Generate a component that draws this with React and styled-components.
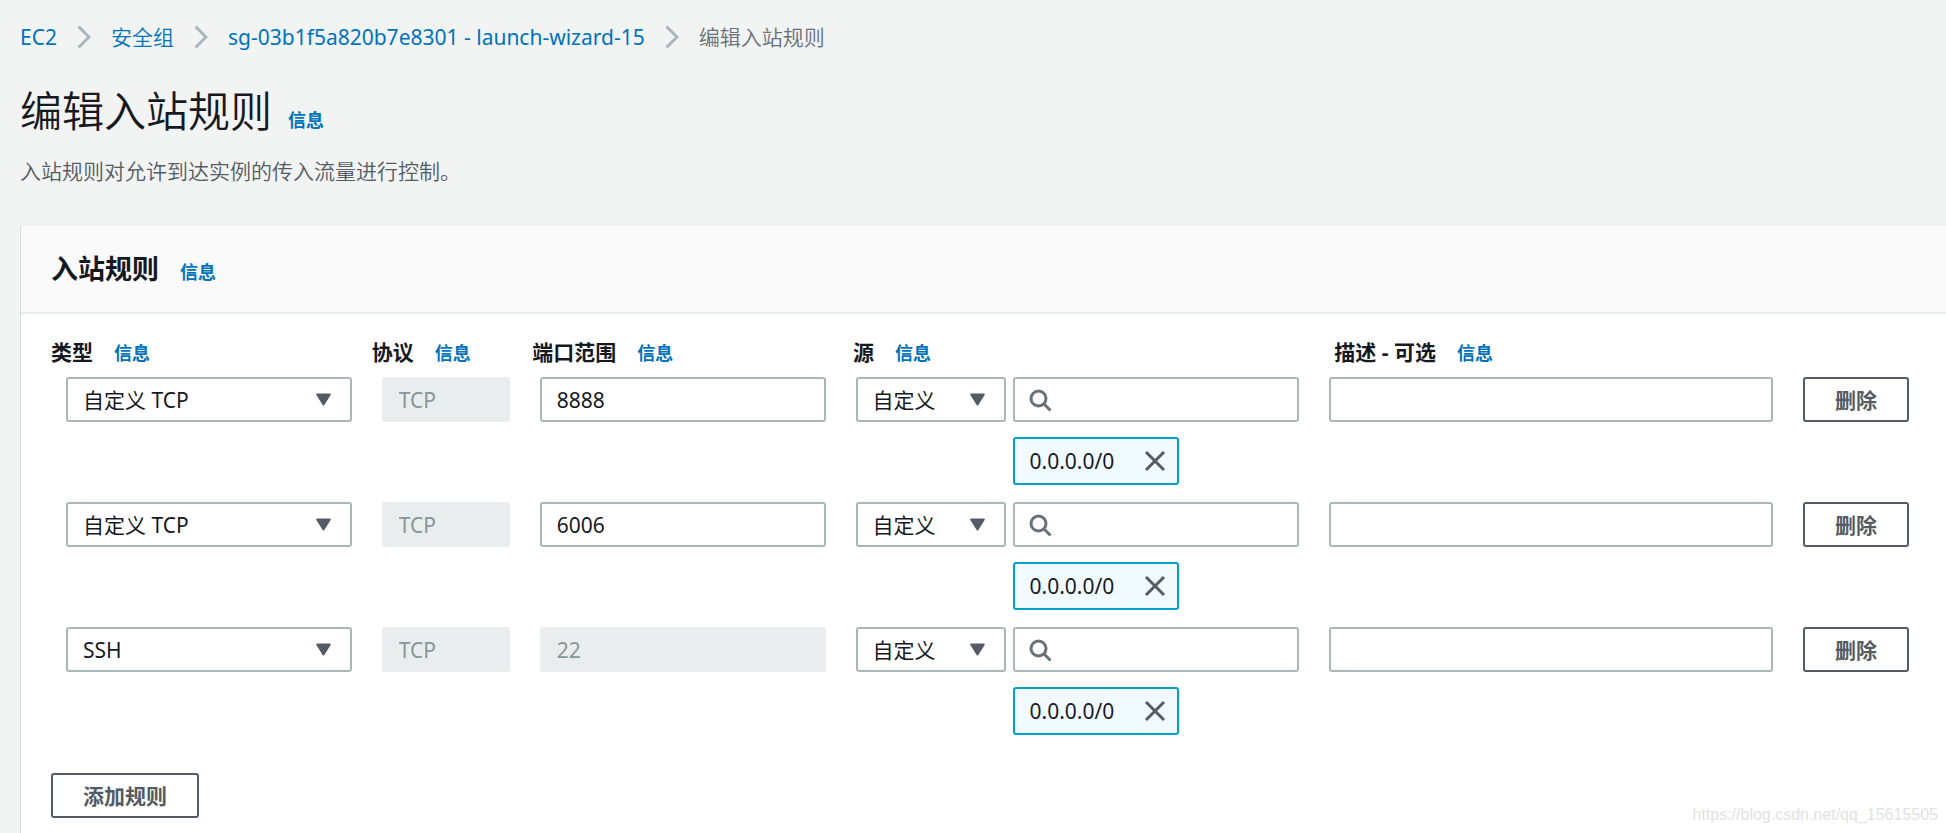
import React, { useState } from "react";
import styled, { createGlobalStyle, css } from "styled-components";

const color = {
  page: "#f2f3f3",
  text: "#16191f",
  secondary: "#545b64",
  muted: "#687078",
  disabled: "#879596",
  link: "#0073bb",
  border: "#aab7b8",
  divider: "#eaeded",
  token: "#00a1c9",
};

const GlobalStyle = createGlobalStyle`
  *, *::before, *::after { box-sizing: border-box; }
  body {
    margin: 0;
    background: ${color.page};
    color: ${color.text};
    font-family: "Noto Sans", "Noto Sans CJK SC", sans-serif;
    font-size: 21px;
    line-height: 30px;
  }
  button, input, select { font: inherit; color: inherit; }
`;

const Page = styled.main`
  position: relative;
  display: flex;
  flex-direction: column;
  min-height: 100vh;
  padding: 22px 0 0 20px;
  overflow: hidden;
`;

const Crumbs = styled.ol`
  display: flex;
  align-items: center;
  gap: 20px;
  margin: 0;
  padding: 0;
  list-style: none;
  color: ${color.muted};
`;

const Crumb = styled.li`
  display: flex;
  align-items: center;
  gap: 20px;
  white-space: nowrap;
  font-weight: ${(p) => (p.$light ? 350 : 400)};
`;

const Link = styled.a`
  color: ${color.link};
  text-decoration: none;
  &:hover { text-decoration: underline; }
`;

const InfoLink = styled(Link)`
  font-size: 18px;
  font-weight: 700;
`;

const PageHeader = styled.header`
  padding: 29px 0 39px;
`;

const TitleLine = styled.div`
  display: flex;
  align-items: baseline;
  gap: ${(p) => p.$gap}px;
`;

const PageTitle = styled.h1`
  margin: 0;
  font-size: 42px;
  line-height: 60px;
  font-weight: 350;
`;

const Description = styled.p`
  margin: 15px 0 0;
  color: ${color.secondary};
  font-weight: 350;
`;

const Card = styled.section`
  flex: 1;
  background: #fff;
  border-top: 1px solid ${color.divider};
  border-left: 1px solid #d5dbdb;
`;

const CardHeader = styled.div`
  padding: 23px 30px;
  background: #fafafa;
  border-bottom: 2px solid ${color.divider};
`;

const CardTitle = styled.h2`
  margin: 0;
  font-size: 27px;
  line-height: 40px;
  font-weight: 700;
`;

const CardBody = styled.div`
  padding: 23px 0 15px 30px;
`;

const ColumnTitles = styled.div`
  display: grid;
  grid-template-columns: 2fr 1fr 2fr 3fr 4fr;
  margin-right: -30px;
  padding-bottom: 9px;
`;

const ColumnTitle = styled(TitleLine)`
  font-weight: 700;
  white-space: nowrap;
`;

const RuleRow = styled.div`
  display: grid;
  grid-template-columns: 2fr 1fr 2fr 3fr 3fr 1fr;
  align-items: start;
  margin-bottom: 17px;
`;

const Cell = styled.div`
  min-width: 0;
  padding: 0 15px;
`;

const SourceCell = styled(Cell)`
  display: grid;
  grid-template-columns: 150px minmax(0, 1fr);
  column-gap: 7px;
  row-gap: 15px;
`;

const Field = styled.div`
  position: relative;
  display: flex;
`;

const control = css`
  width: 100%;
  height: 45px;
  padding: 0 15px;
  border: 2px solid ${color.border};
  border-radius: 3px;
  background: #fff;
  outline-color: ${color.token};
`;

const Select = styled.select`
  ${control}
  appearance: none;
  padding-right: 42px;
`;

const Input = styled.input`
  ${control}
  padding-left: ${(p) => (p.$search ? 48 : 15)}px;
  &:disabled {
    border-color: ${color.divider};
    background: ${color.divider};
    color: ${color.disabled};
  }
`;

const Caret = styled.svg`
  position: absolute;
  top: 16px;
  right: 21px;
  pointer-events: none;
`;

const SearchGlyph = styled.svg`
  position: absolute;
  top: 12px;
  left: 16px;
  pointer-events: none;
`;

const Token = styled.div`
  grid-column: 2;
  justify-self: start;
  display: flex;
  align-items: center;
  justify-content: space-between;
  gap: 24px;
  min-width: 166px;
  height: 48px;
  padding: 0 11px 0 15px;
  border: 2px solid ${color.token};
  border-radius: 3px;
  background: #f1faff;
`;

const TokenClose = styled.button`
  display: flex;
  padding: 0;
  border: 0;
  background: none;
  cursor: pointer;
`;

const Button = styled.button`
  height: 45px;
  padding: 0 30px;
  border: 2px solid ${color.secondary};
  border-radius: 3px;
  background: #fff;
  color: ${color.secondary};
  font-weight: 700;
  white-space: nowrap;
  cursor: pointer;
`;

const Actions = styled.div`
  padding-top: 21px;
`;

const Watermark = styled.div`
  position: absolute;
  right: 8px;
  bottom: 8px;
  color: #e2e2e2;
  font: 16px/20px "Liberation Sans", sans-serif;
  pointer-events: none;
`;

function Chevron() {
  return (
    <svg width="14" height="24" viewBox="0 0 14 24" fill="none" stroke={color.border} strokeWidth="3" aria-hidden="true">
      <path d="M1.5 1.5 12 12 1.5 22.5" />
    </svg>
  );
}

function SelectField({ labelledBy, value, options }) {
  const [current, setCurrent] = useState(value);
  return (
    <Field>
      <Select aria-labelledby={labelledBy} value={current} onChange={(e) => setCurrent(e.target.value)}>
        {options.map((o) => (
          <option key={o}>{o}</option>
        ))}
      </Select>
      <Caret width="15" height="13" viewBox="0 0 15 13" aria-hidden="true">
        <path
          d="M1.2 1.5h12.6L7.5 11.5z"
          fill={color.secondary}
          stroke={color.secondary}
          strokeWidth="2"
          strokeLinejoin="round"
        />
      </Caret>
    </Field>
  );
}

const crumbs = [
  { label: "EC2" },
  { label: "安全组", light: true },
  { label: "sg-03b1f5a820b7e8301 - launch-wizard-15" },
];

const columns = [
  { id: "col-type", label: "类型" },
  { id: "col-protocol", label: "协议" },
  { id: "col-port", label: "端口范围" },
  { id: "col-source", label: "源" },
  { id: "col-description", label: "描述 - 可选" },
];

const rules = [
  { type: "自定义 TCP", port: "8888" },
  { type: "自定义 TCP", port: "6006" },
  { type: "SSH", port: "22", fixedPort: true },
];

function Rule({ rule }) {
  return (
    <RuleRow>
      <Cell>
        <SelectField labelledBy="col-type" value={rule.type} options={["自定义 TCP", "SSH"]} />
      </Cell>
      <Cell>
        <Field>
          <Input aria-labelledby="col-protocol" defaultValue="TCP" disabled />
        </Field>
      </Cell>
      <Cell>
        <Field>
          <Input aria-labelledby="col-port" defaultValue={rule.port} disabled={rule.fixedPort} />
        </Field>
      </Cell>
      <SourceCell>
        <SelectField labelledBy="col-source" value="自定义" options={["自定义"]} />
        <Field>
          <Input $search type="text" aria-labelledby="col-source" />
          <SearchGlyph
            width="24"
            height="24"
            viewBox="0 0 24 24"
            fill="none"
            stroke={color.muted}
            strokeWidth="3"
            aria-hidden="true"
          >
            <circle cx="9.5" cy="9.5" r="7.5" />
            <path d="M14.8 14.8 21.5 21.5" />
          </SearchGlyph>
        </Field>
        <Token>
          <span>0.0.0.0/0</span>
          <TokenClose type="button" aria-label="0.0.0.0/0">
            <svg width="22" height="22" viewBox="0 0 22 22" stroke={color.secondary} strokeWidth="3" aria-hidden="true">
              <path d="M2 2 20 20M20 2 2 20" />
            </svg>
          </TokenClose>
        </Token>
      </SourceCell>
      <Cell>
        <Field>
          <Input type="text" aria-labelledby="col-description" />
        </Field>
      </Cell>
      <Cell>
        <Button type="button">删除</Button>
      </Cell>
    </RuleRow>
  );
}

export default function App() {
  return (
    <Page lang="zh-CN">
      <GlobalStyle />
      <nav>
        <Crumbs>
          {crumbs.map((c) => (
            <Crumb key={c.label} $light={c.light}>
              <Link href="#">{c.label}</Link>
              <Chevron />
            </Crumb>
          ))}
          <Crumb $light aria-current="page">编辑入站规则</Crumb>
        </Crumbs>
      </nav>
      <PageHeader>
        <TitleLine $gap={16}>
          <PageTitle>编辑入站规则</PageTitle>
          <InfoLink href="#">信息</InfoLink>
        </TitleLine>
        <Description>入站规则对允许到达实例的传入流量进行控制。</Description>
      </PageHeader>
      <Card>
        <CardHeader>
          <TitleLine $gap={21}>
            <CardTitle>入站规则</CardTitle>
            <InfoLink href="#">信息</InfoLink>
          </TitleLine>
        </CardHeader>
        <CardBody>
          <ColumnTitles>
            {columns.map((c) => (
              <ColumnTitle key={c.id} $gap={21}>
                <span id={c.id}>{c.label}</span>
                <InfoLink href="#">信息</InfoLink>
              </ColumnTitle>
            ))}
          </ColumnTitles>
          {rules.map((r) => (
            <Rule key={r.port} rule={r} />
          ))}
          <Actions>
            <Button type="button">添加规则</Button>
          </Actions>
        </CardBody>
      </Card>
      <Watermark>https://blog.csdn.net/qq_15615505</Watermark>
    </Page>
  );
}
